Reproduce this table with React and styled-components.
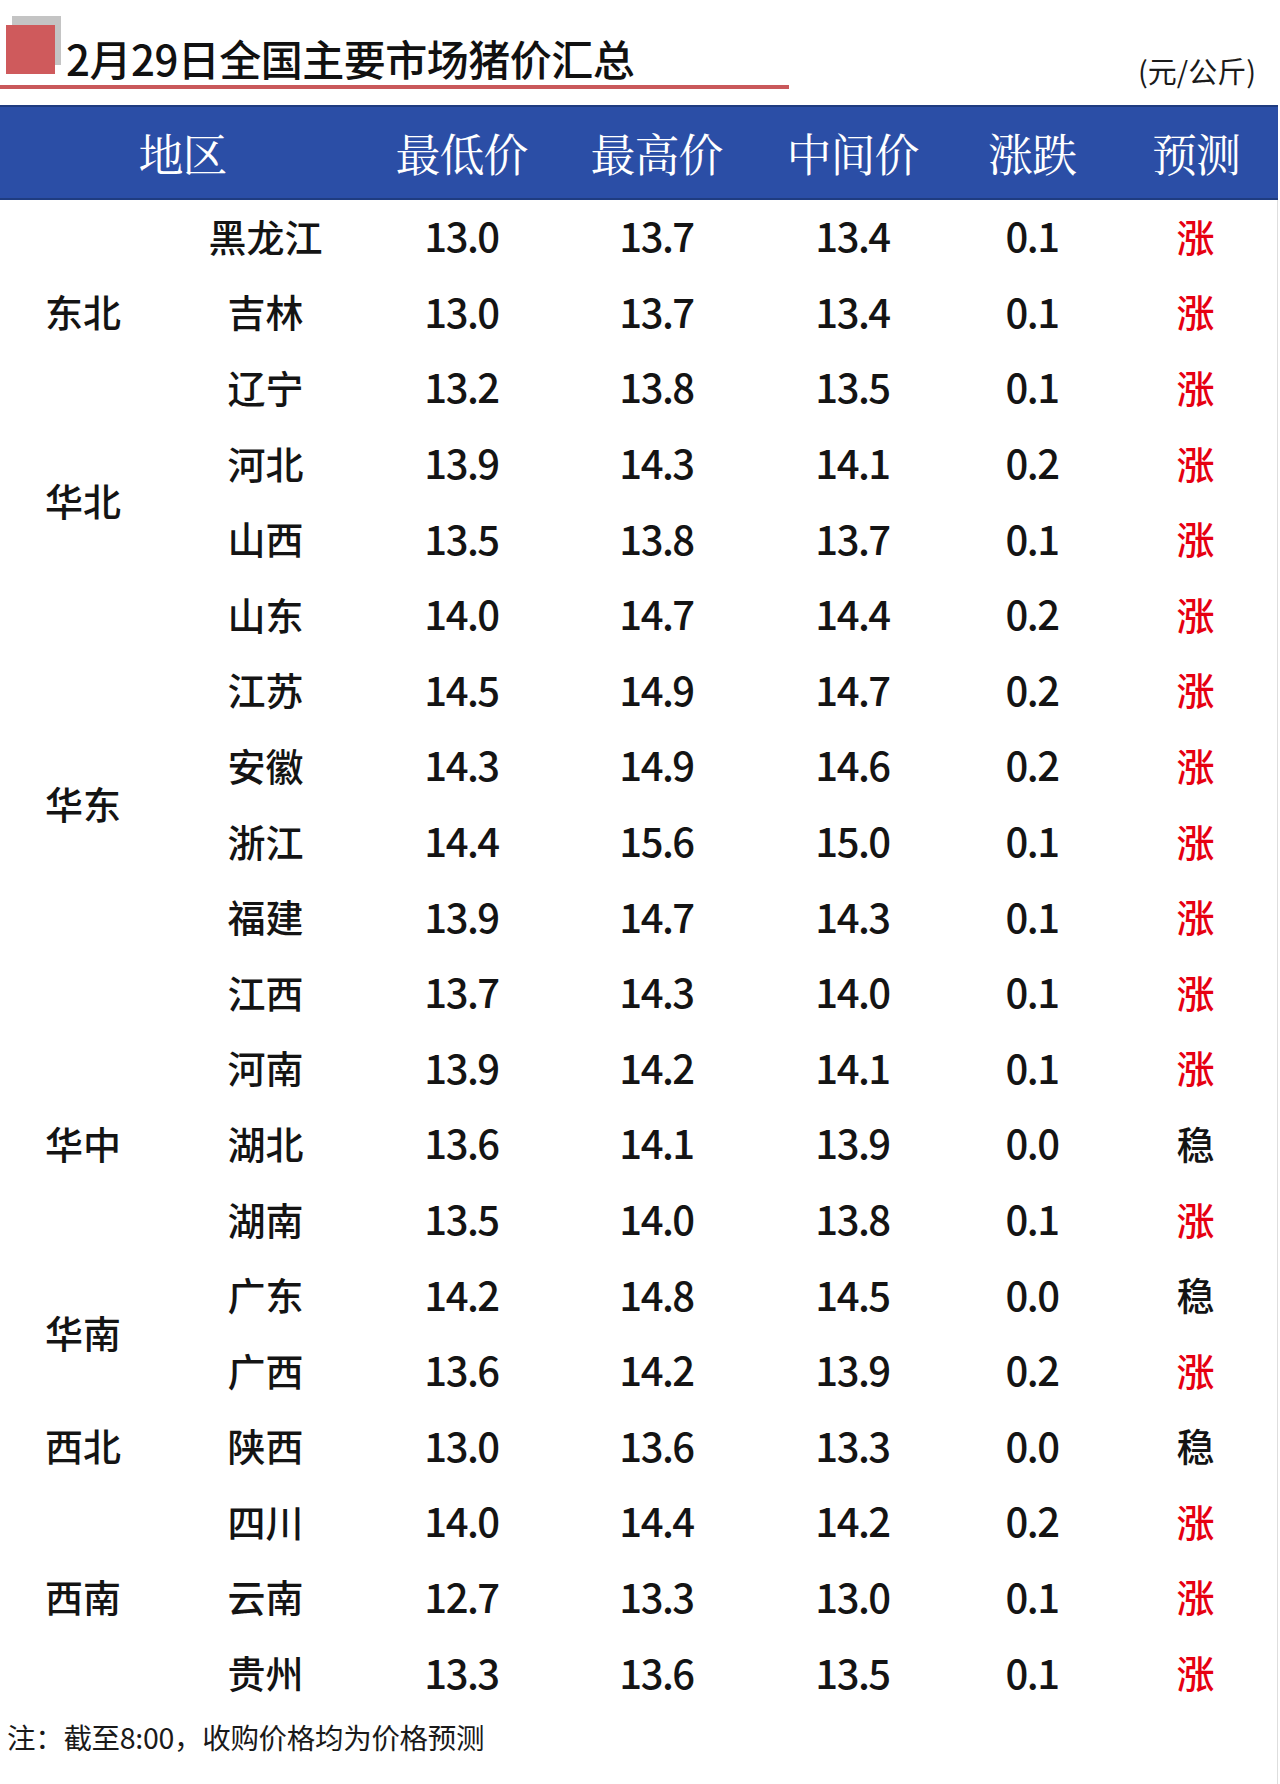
import React from "react";
import styled, { createGlobalStyle } from "styled-components";

const GlobalStyle = createGlobalStyle`
  html, body {
    margin: 0;
    padding: 0;
    background: #ffffff;
  }
  body {
    font-family: "Noto Sans CJK SC", "Noto Sans", sans-serif;
    color: #141414;
  }
`;

const COLS = "166px 199px 193px 197px 195px 164px 1fr";

const Page = styled.div`
  width: 1280px;
  height: 1784px;
  overflow: hidden;
  display: flex;
  flex-direction: column;
`;

const TopBar = styled.div`
  height: 89px;
  margin-bottom: 16px;
  display: flex;
  justify-content: space-between;
  align-items: flex-end;
`;

const TitleBlock = styled.div`
  width: 789px;
  height: 89px;
  box-sizing: border-box;
  padding: 25px 0 0 6px;
  border-bottom: 4px solid #c9585b;
  display: flex;
  align-items: flex-start;
  gap: 11px;
`;

const Badge = styled.span`
  width: 49px;
  height: 49px;
  flex: none;
  background: #cf5a5c;
  box-shadow: 6px -9px 0 0 #c4c4c4;
  position: relative;
  z-index: 1;
`;

const Title = styled.h1`
  margin: 12px 0 0;
  font-size: 42px;
  line-height: 1;
  font-weight: 500;
  color: #111;
  letter-spacing: -0.5px;
  white-space: nowrap;
`;

const Unit = styled.span`
  font-size: 29px;
  line-height: 29px;
  margin: 0 24px 4px 0;
  color: #1a1a1a;
`;

const HeadRow = styled.div`
  width: 1278px;
  height: 95px;
  box-sizing: border-box;
  background: #2b4ea6;
  border-top: 2px solid #1f3c80;
  border-bottom: 2px solid #1f3c80;
  display: grid;
  grid-template-columns: 365px 193px 197px 195px 164px 1fr;
  align-items: center;
`;

const HeadCell = styled.div`
  text-align: center;
  color: #ffffff;
  font-family: "Noto Serif CJK SC", "Noto Sans CJK SC", serif;
  font-size: 45px;
  line-height: 1;
  font-weight: 400;
  letter-spacing: -1px;
`;

const Sheet = styled.div`
  flex: 1;
  width: 1277px;
  border-right: 1px solid #dedede;
  display: flex;
  flex-direction: column;
`;

const Body = styled.div`
  display: grid;
  grid-template-columns: ${COLS};
  grid-auto-rows: 75.6px;
`;

const Cell = styled.div`
  display: flex;
  align-items: center;
  justify-content: center;
  padding-bottom: 5px;
  font-size: ${(p) => (p.$num ? "40px" : "38px")};
  font-weight: 500;
  letter-spacing: ${(p) => (p.$num ? "-1.5px" : "0")};
  color: ${(p) => (p.$up ? "#e60012" : "#141414")};
  white-space: nowrap;
`;

const RegionCell = styled(Cell)`
  grid-column: 1;
  grid-row: span ${(p) => p.$span};
`;

const Note = styled.p`
  margin: 0;
  padding: 10px 0 0 7px;
  font-size: 28.5px;
  line-height: 29px;
  letter-spacing: -0.3px;
  color: #1a1a1a;
`;

const groups = [
  {
    region: "东北",
    rows: [
      ["黑龙江", "13.0", "13.7", "13.4", "0.1", "涨"],
      ["吉林", "13.0", "13.7", "13.4", "0.1", "涨"],
      ["辽宁", "13.2", "13.8", "13.5", "0.1", "涨"],
    ],
  },
  {
    region: "华北",
    rows: [
      ["河北", "13.9", "14.3", "14.1", "0.2", "涨"],
      ["山西", "13.5", "13.8", "13.7", "0.1", "涨"],
    ],
  },
  {
    region: "华东",
    rows: [
      ["山东", "14.0", "14.7", "14.4", "0.2", "涨"],
      ["江苏", "14.5", "14.9", "14.7", "0.2", "涨"],
      ["安徽", "14.3", "14.9", "14.6", "0.2", "涨"],
      ["浙江", "14.4", "15.6", "15.0", "0.1", "涨"],
      ["福建", "13.9", "14.7", "14.3", "0.1", "涨"],
      ["江西", "13.7", "14.3", "14.0", "0.1", "涨"],
    ],
  },
  {
    region: "华中",
    rows: [
      ["河南", "13.9", "14.2", "14.1", "0.1", "涨"],
      ["湖北", "13.6", "14.1", "13.9", "0.0", "稳"],
      ["湖南", "13.5", "14.0", "13.8", "0.1", "涨"],
    ],
  },
  {
    region: "华南",
    rows: [
      ["广东", "14.2", "14.8", "14.5", "0.0", "稳"],
      ["广西", "13.6", "14.2", "13.9", "0.2", "涨"],
    ],
  },
  {
    region: "西北",
    rows: [["陕西", "13.0", "13.6", "13.3", "0.0", "稳"]],
  },
  {
    region: "西南",
    rows: [
      ["四川", "14.0", "14.4", "14.2", "0.2", "涨"],
      ["云南", "12.7", "13.3", "13.0", "0.1", "涨"],
      ["贵州", "13.3", "13.6", "13.5", "0.1", "涨"],
    ],
  },
];

const headers = ["地区", "最低价", "最高价", "中间价", "涨跌", "预测"];

export default function App() {
  return (
    <>
      <GlobalStyle />
      <Page>
        <TopBar>
          <TitleBlock>
            <Badge />
            <Title>2月29日全国主要市场猪价汇总</Title>
          </TitleBlock>
          <Unit>(元/公斤)</Unit>
        </TopBar>
        <HeadRow>
          {headers.map((h) => (
            <HeadCell key={h}>{h}</HeadCell>
          ))}
        </HeadRow>
        <Sheet>
          <Body>
            {groups.map((g) => (
              <React.Fragment key={g.region}>
                <RegionCell $span={g.rows.length}>{g.region}</RegionCell>
                {g.rows.map((r) => (
                  <React.Fragment key={r[0]}>
                    <Cell>{r[0]}</Cell>
                    <Cell $num>{r[1]}</Cell>
                    <Cell $num>{r[2]}</Cell>
                    <Cell $num>{r[3]}</Cell>
                    <Cell $num>{r[4]}</Cell>
                    <Cell $up={r[5] === "涨"}>{r[5]}</Cell>
                  </React.Fragment>
                ))}
              </React.Fragment>
            ))}
          </Body>
          <Note>注：截至8:00，收购价格均为价格预测</Note>
        </Sheet>
      </Page>
    </>
  );
}
